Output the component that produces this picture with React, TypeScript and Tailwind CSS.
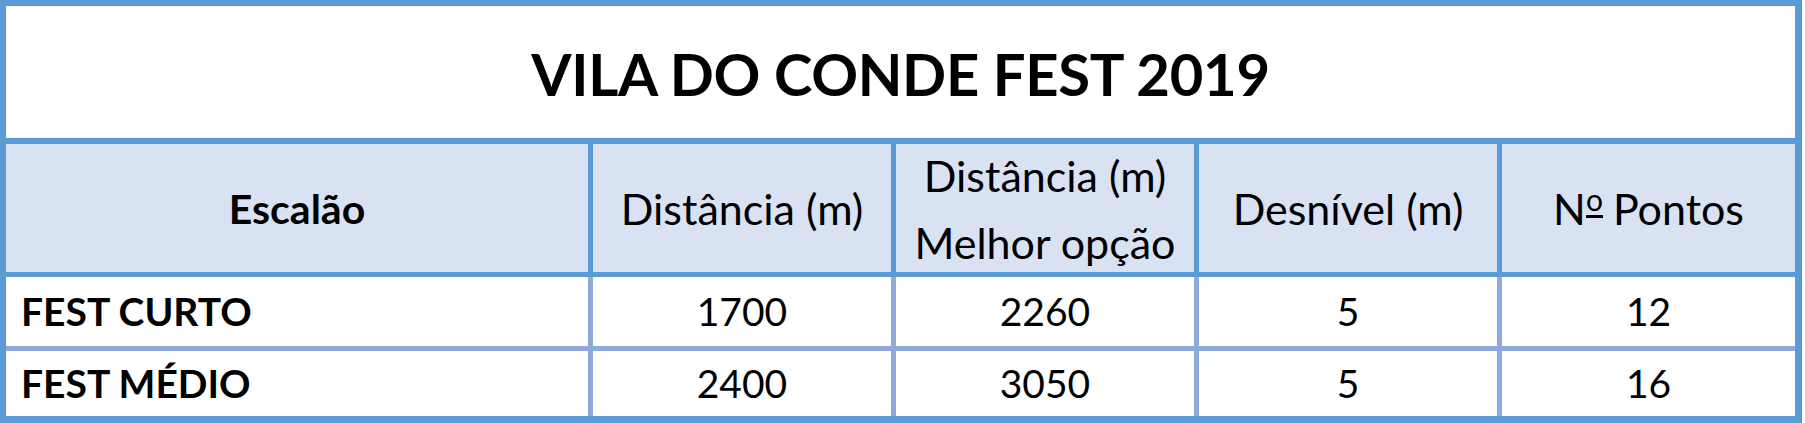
const rows = [
  { name: 'FEST CURTO', dist: '1700', best: '2260', desn: '5', pontos: '12' },
  { name: 'FEST MÉDIO', dist: '2400', best: '3050', desn: '5', pontos: '16' },
];

const font = { fontFamily: 'Lato, "Open Sans", sans-serif' };

export default function App() {
  return (
    <div className="w-[1805px] h-[423px] bg-white text-black" style={font}>
      <div className="w-[1802px] h-[423px] border-t-[6px] border-l-[6px] border-r-[7px] border-b-[7px] border-[#5b9bd5] flex flex-col">
        {/* Title */}
        <div className="h-[138px] border-b-[6px] border-[#5b9bd5] flex items-center justify-center pt-[3px]">
          <h1 className="text-[58px] font-bold leading-none tracking-[-0.3px]">VILA DO CONDE FEST 2019</h1>
        </div>

        {/* Header */}
        <div className="h-[133px] bg-[#d9e2f3] border-b-[5px] border-[#5b9bd5] grid grid-cols-[587px_303px_303px_303px_1fr] text-[43px] leading-none">
          <div className="border-r-[5px] border-[#5b9bd5] flex items-center justify-center font-bold text-[41px]">Escalão</div>
          <div className="border-r-[5px] border-[#5b9bd5] flex items-center justify-center">Distância (m)</div>
          <div className="border-r-[5px] border-[#5b9bd5] flex flex-col items-center justify-center gap-[24px] pt-[2px]">
            <span>Distância (m)</span>
            <span>Melhor opção</span>
          </div>
          <div className="border-r-[5px] border-[#5b9bd5] flex items-center justify-center">Desnível (m)</div>
          <div className="flex items-center justify-center">
            N
            <span className="inline-block text-[30px] leading-none border-b-[3px] border-black pb-[1px] -translate-y-[7px] mr-[10px]">o</span>
            Pontos
          </div>
        </div>

        {/* Data rows */}
        {rows.map((r, i) => (
          <div
            key={r.name}
            className={
              i === 0
                ? 'h-[74px] border-b-[5px] border-[#8eaadb] grid grid-cols-[587px_303px_303px_303px_1fr] text-[39px] leading-none'
                : 'h-[65px] grid grid-cols-[587px_303px_303px_303px_1fr] text-[39px] leading-none'
            }
          >
            <div className="border-r-[5px] border-[#8eaadb] flex items-center pl-[15px] font-bold">{r.name}</div>
            <div className="border-r-[5px] border-[#8eaadb] flex items-center justify-center">{r.dist}</div>
            <div className="border-r-[5px] border-[#8eaadb] flex items-center justify-center">{r.best}</div>
            <div className="border-r-[5px] border-[#8eaadb] flex items-center justify-center">{r.desn}</div>
            <div className="flex items-center justify-center">{r.pontos}</div>
          </div>
        ))}
      </div>
    </div>
  );
}
